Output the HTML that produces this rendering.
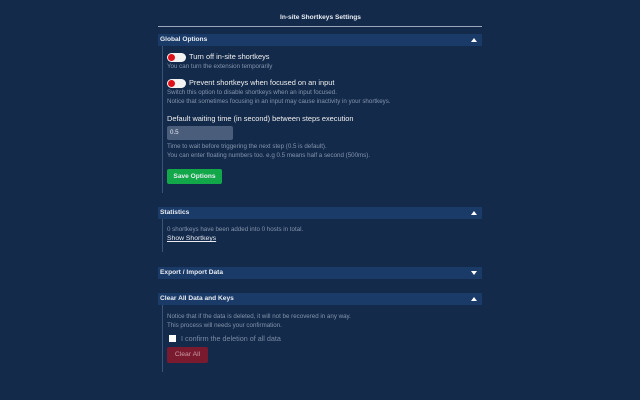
<!DOCTYPE html>
<html><head><style>
body{margin:0;width:640px;height:400px;background:#132a4b;font-family:"Liberation Sans",sans-serif;color:#e8ecf2;position:relative;overflow:hidden}
.a{position:absolute;white-space:nowrap}
.t{font-size:6.6px;font-weight:bold}
.h{position:absolute;left:158px;width:324px;height:12px;background:#1a3a68;font-size:6.6px;font-weight:bold;line-height:12px;text-indent:2px}
.h i{position:absolute;right:5px;top:4px;width:0;height:0;border-left:3px solid transparent;border-right:3px solid transparent}
.up{border-bottom:4px solid #fff}.dn{border-top:4px solid #fff;top:4px!important}
.bl{position:absolute;left:162px;width:1px;background:#3a5378}
.s{font-size:6.2px;color:#8494ab}
.tg{position:absolute;left:167px;width:19px;height:9px;border-radius:5px;background:#f3f3f3}
.tg b{position:absolute;left:1px;top:1px;width:7px;height:7px;border-radius:50%;background:#e0101a}
.l{font-size:7.4px;color:#f0f0f0}
</style></head><body>
<div class="a t" style="left:280px;top:14px">In-site Shortkeys Settings</div>
<div class="a" style="left:158px;top:26px;width:324px;height:1px;background:#9aa7ba"></div>

<div class="h" style="top:34px">Global Options<i class="up"></i></div>
<div class="bl" style="top:46px;height:147px"></div>
<div class="tg" style="top:53px"><b></b></div>
<div class="a l" style="left:189px;top:52px">Turn off in-site shortkeys</div>
<div class="a s" style="left:167px;top:63px">You can turn the extension temporarily</div>
<div class="tg" style="top:79px"><b></b></div>
<div class="a l" style="left:189px;top:78px">Prevent shortkeys when focused on an input</div>
<div class="a s" style="left:167px;top:89px">Switch this option to disable shortkeys when an input focused.</div>
<div class="a s" style="left:167px;top:98px">Notice that sometimes focusing in an input may cause inactivity in your shortkeys.</div>
<div class="a l" style="left:167px;top:114px">Default waiting time (in second) between steps execution</div>
<div class="a" style="left:167px;top:126px;width:66px;height:14px;background:#4a5d7a;border-radius:2px;font-size:6.2px;line-height:14px;text-indent:3px">0.5</div>
<div class="a s" style="left:167px;top:143px">Time to wait before triggering the next step (0.5 is default).</div>
<div class="a s" style="left:167px;top:152px">You can enter floating numbers too. e.g 0.5 means half a second (500ms).</div>
<div class="a" style="left:167px;top:169px;width:55px;height:15px;background:#12a84a;border-radius:2px;font-size:6.6px;font-weight:bold;line-height:15px;text-align:center">Save Options</div>

<div class="h" style="top:207px">Statistics<i class="up"></i></div>
<div class="bl" style="top:219px;height:33px"></div>
<div class="a s" style="left:167px;top:226px">0 shortkeys have been added into 0 hosts in total.</div>
<div class="a" style="left:167px;top:235px;font-size:6.8px;text-decoration:underline;color:#e8ecf2">Show Shortkeys</div>

<div class="h" style="top:267px">Export / Import Data<i class="dn"></i></div>

<div class="h" style="top:293px">Clear All Data and Keys<i class="up"></i></div>
<div class="bl" style="top:305px;height:67px"></div>
<div class="a s" style="left:167px;top:313px">Notice that if the data is deleted, it will not be recovered in any way.</div>
<div class="a s" style="left:167px;top:322px">This process will needs your confirmation.</div>
<div class="a" style="left:169px;top:335px;width:7px;height:7px;background:#fff"></div>
<div class="a" style="left:181px;top:334px;font-size:7.2px;color:#7a8aa2">I confirm the deletion of all data</div>
<div class="a" style="left:167px;top:347px;width:41px;height:16px;background:#7a1a2e;border-radius:2px;font-size:6.8px;line-height:16px;text-align:center;color:#c99aa6">Clear All</div>
</body></html>
